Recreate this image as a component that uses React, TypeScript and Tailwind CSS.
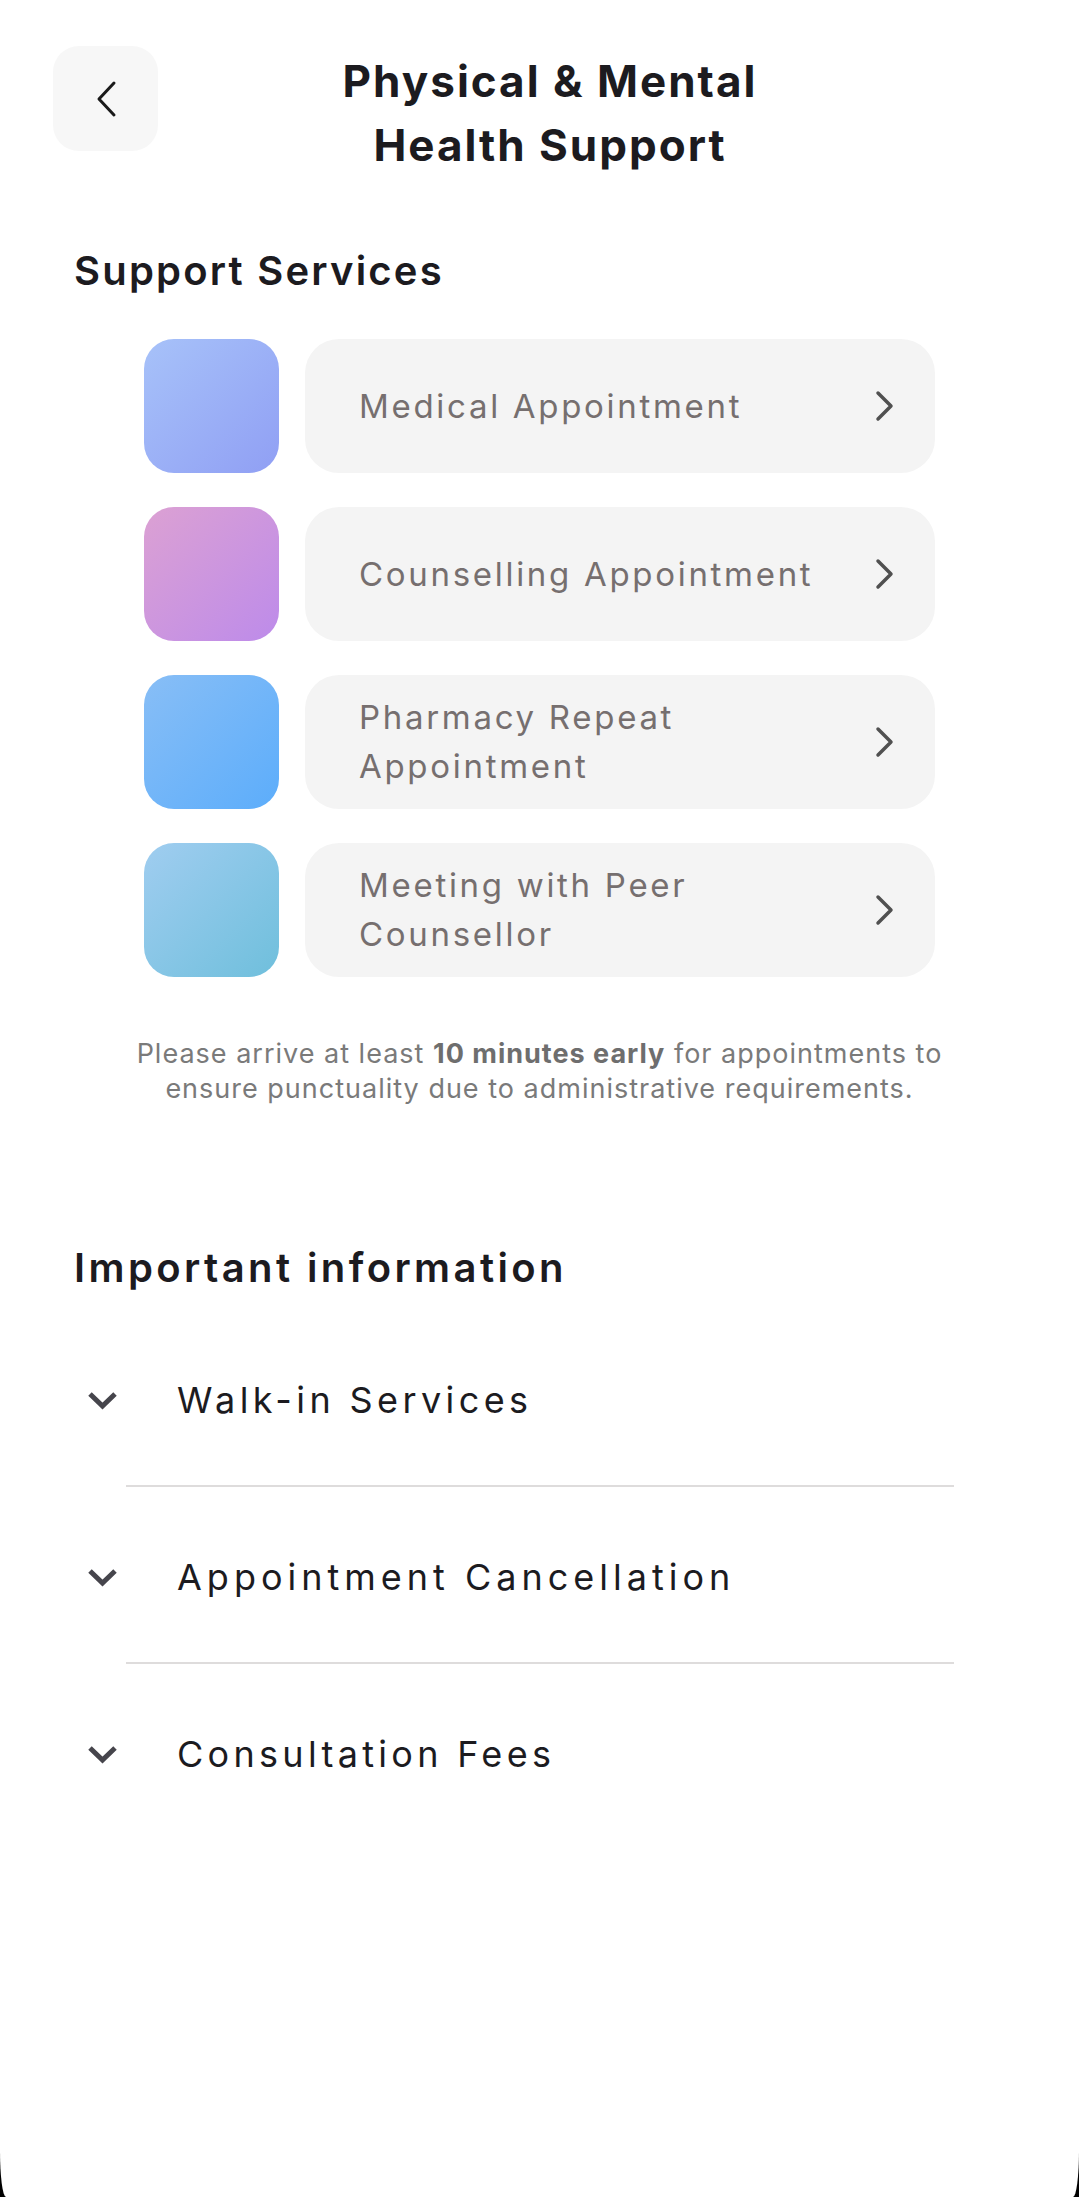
import React from 'react';

const services = [
  { lines: ['Medical Appointment'], from: '#a7c2f9', to: '#909ff4' },
  { lines: ['Counselling Appointment'], from: '#dca1d3', to: '#bd8bea' },
  { lines: ['Pharmacy Repeat', 'Appointment'], from: '#88bef6', to: '#5cadfb' },
  { lines: ['Meeting with Peer', 'Counsellor'], from: '#a0cdf0', to: '#6fbfdc' },
];

const infoItems = [
  { label: 'Walk-in Services', track: 'tracking-[4.4px]' },
  { label: 'Appointment Cancellation', track: 'tracking-[5px]' },
  { label: 'Consultation Fees', track: 'tracking-[4.3px]' },
];

function BackChevron() {
  return (
    <svg width="24" height="40" viewBox="0 0 24 40" fill="none">
      <path d="M20 4 L5 20 L20 36" stroke="#1a1a1a" strokeWidth="3" strokeLinecap="round" strokeLinejoin="round" />
    </svg>
  );
}

function RightChevron() {
  return (
    <svg width="20" height="32" viewBox="0 0 20 32" fill="none">
      <path d="M3 3 L16 16 L3 29" stroke="#505050" strokeWidth="3.5" strokeLinecap="round" strokeLinejoin="round" />
    </svg>
  );
}

function DownChevron() {
  return (
    <svg width="31" height="19" viewBox="0 0 31 19" fill="none">
      <path d="M3 3 L15.5 15 L28 3" stroke="#46454c" strokeWidth="5" strokeLinejoin="miter" />
    </svg>
  );
}

export default function App() {
  return (
    <div className="w-[1079px] h-[2197px] bg-black overflow-hidden" style={{ fontFamily: 'Inter, "Noto Sans", sans-serif' }}>
      <div className="h-full bg-white rounded-bl-[6px_46px] rounded-br-[6px_46px] overflow-hidden">
        {/* Header */}
        <div className="flex items-start pt-[46px] px-[53px]">
          <button className="w-[105px] h-[105px] shrink-0 rounded-[26px] bg-[#f7f7f7] flex items-center justify-center">
            <BackChevron />
          </button>
          <h1 className="flex-1 mt-[3px] mr-[84px] text-center text-[44px] leading-[64px] font-bold tracking-[2px] text-[#1c1b1f]">
            Physical &amp; Mental
            <br />
            Health Support
          </h1>
        </div>

        <div className="px-[74px]">
          {/* Support services */}
          <h2 className="mt-[70px] text-[40px] leading-[48px] font-semibold tracking-[2.2px] text-[#1c1b1f]">
            Support Services
          </h2>

          <div className="mt-[44px] ml-[70px] flex flex-col gap-[34px]">
            {services.map((s) => (
              <div key={s.lines[0]} className="flex items-stretch h-[134px] gap-[26px]">
                <div
                  className="w-[135px] shrink-0 rounded-[30px]"
                  style={{ backgroundImage: `linear-gradient(135deg, ${s.from}, ${s.to})` }}
                />
                <div className="w-[630px] rounded-[34px] bg-[#f4f4f4] flex items-center justify-between pl-[54px] pr-[40px]">
                  <p className="text-[33px] leading-[49px] tracking-[2.7px] text-[#766f6f]">
                    {s.lines.map((l, i) => (
                      <React.Fragment key={l}>
                        {i > 0 && <br />}
                        {l}
                      </React.Fragment>
                    ))}
                  </p>
                  <RightChevron />
                </div>
              </div>
            ))}
          </div>

          <p className="mt-[59px] text-center text-[27px] leading-[35px] tracking-[1px] text-[#7a7a7a]">
            Please arrive at least <span className="font-bold text-[#6e6e6e]">10 minutes early</span> for appointments to
            <br />
            ensure punctuality due to administrative requirements.
          </p>

          {/* Important information */}
          <h2 className="mt-[138px] text-[40px] leading-[48px] font-semibold tracking-[3.4px] text-[#1c1b1f]">
            Important information
          </h2>

          <div className="mt-[86px]">
            {infoItems.map((item, i) => (
              <div key={item.label}>
                {i > 0 && <div className="mt-[63px] mb-[68px] ml-[52px] mr-[51px] h-[2px] bg-[#dedcdc]" />}
                <div className="flex items-center h-[44px] pl-[13px] gap-[59px]">
                  <DownChevron />
                  <span className={`text-[36px] leading-[44px] text-[#1c1b1f] ${item.track}`}>{item.label}</span>
                </div>
              </div>
            ))}
          </div>
        </div>
      </div>
    </div>
  );
}
